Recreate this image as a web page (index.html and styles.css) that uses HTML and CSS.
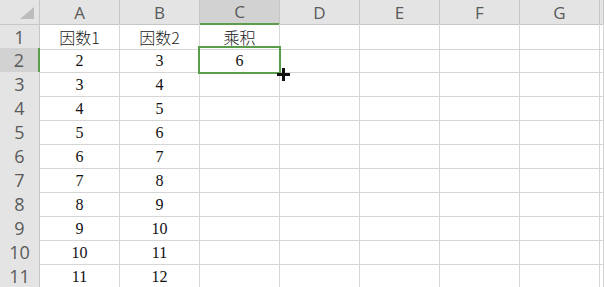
FILE: index.html
```html
<!DOCTYPE html>
<html lang="zh-CN">
<head>
    <meta charset="UTF-8">
    <title>乘积</title>
    <link rel="stylesheet" href="styles.css">
</head>
<body>

    <!-- Sheet -->
    <div class="sheet">
        <div class="row head">
            <div class="corner"><span class="tri"></span></div>
            <div class="col">A</div>
            <div class="col">B</div>
            <div class="col active">C</div>
            <div class="col">D</div>
            <div class="col">E</div>
            <div class="col">F</div>
            <div class="col">G</div>
            <div class="col"></div>
        </div>

        <div class="row">
            <div class="num">1</div>
            <div class="cell cjk">因数1</div>
            <div class="cell cjk">因数2</div>
            <div class="cell cjk">乘积</div>
            <div class="cell"></div><div class="cell"></div><div class="cell"></div><div class="cell"></div><div class="cell"></div>
        </div>
        <div class="row">
            <div class="num active">2</div>
            <div class="cell">2</div>
            <div class="cell">3</div>
            <div class="cell selected">6<span class="fill-cursor"></span></div>
            <div class="cell"></div><div class="cell"></div><div class="cell"></div><div class="cell"></div><div class="cell"></div>
        </div>
        <div class="row">
            <div class="num">3</div>
            <div class="cell">3</div>
            <div class="cell">4</div>
            <div class="cell"></div><div class="cell"></div><div class="cell"></div><div class="cell"></div><div class="cell"></div><div class="cell"></div>
        </div>
        <div class="row">
            <div class="num">4</div>
            <div class="cell">4</div>
            <div class="cell">5</div>
            <div class="cell"></div><div class="cell"></div><div class="cell"></div><div class="cell"></div><div class="cell"></div><div class="cell"></div>
        </div>
        <div class="row">
            <div class="num">5</div>
            <div class="cell">5</div>
            <div class="cell">6</div>
            <div class="cell"></div><div class="cell"></div><div class="cell"></div><div class="cell"></div><div class="cell"></div><div class="cell"></div>
        </div>
        <div class="row">
            <div class="num">6</div>
            <div class="cell">6</div>
            <div class="cell">7</div>
            <div class="cell"></div><div class="cell"></div><div class="cell"></div><div class="cell"></div><div class="cell"></div><div class="cell"></div>
        </div>
        <div class="row">
            <div class="num">7</div>
            <div class="cell">7</div>
            <div class="cell">8</div>
            <div class="cell"></div><div class="cell"></div><div class="cell"></div><div class="cell"></div><div class="cell"></div><div class="cell"></div>
        </div>
        <div class="row">
            <div class="num">8</div>
            <div class="cell">8</div>
            <div class="cell">9</div>
            <div class="cell"></div><div class="cell"></div><div class="cell"></div><div class="cell"></div><div class="cell"></div><div class="cell"></div>
        </div>
        <div class="row">
            <div class="num">9</div>
            <div class="cell">9</div>
            <div class="cell">10</div>
            <div class="cell"></div><div class="cell"></div><div class="cell"></div><div class="cell"></div><div class="cell"></div><div class="cell"></div>
        </div>
        <div class="row">
            <div class="num">10</div>
            <div class="cell">10</div>
            <div class="cell">11</div>
            <div class="cell"></div><div class="cell"></div><div class="cell"></div><div class="cell"></div><div class="cell"></div><div class="cell"></div>
        </div>
        <div class="row">
            <div class="num">11</div>
            <div class="cell">11</div>
            <div class="cell">12</div>
            <div class="cell"></div><div class="cell"></div><div class="cell"></div><div class="cell"></div><div class="cell"></div><div class="cell"></div>
        </div>
    </div>

</body>
</html>
```

FILE: styles.css
```css
/* Sheet */
body {
    margin: 0;
    padding: 0;
    background-color: white;
    overflow: hidden;
}

.sheet {
    width: 604px;
}

.row {
    display: grid;
    grid-template-columns: 40px repeat(7, 80px) 1fr;
    height: 24px;
}

.row > div {
    box-sizing: border-box;
    border-right: 1px solid #d6d6d6;
    border-bottom: 1px solid #d6d6d6;
    display: flex;
    align-items: center;
    justify-content: center;
}

/* Headers */
.corner,
.col,
.num {
    background-color: #e4e4e4;
    color: #5a5a5a;
    font-family: "Open Sans", "Liberation Sans", sans-serif;
}

.row > .corner,
.row > .col,
.row > .num {
    border-color: #c6c6c6;
}

.col {
    font-size: 17px;
}

.num {
    font-size: 18px;
}

.corner {
    position: relative;
}

.tri {
    position: absolute;
    right: 5px;
    bottom: 5px;
    width: 0;
    height: 0;
    border-left: 14px solid transparent;
    border-bottom: 12px solid #bcbcbc;
}

.row > .col.active {
    background-color: #d2d2d2;
    border-bottom: 2px solid #5a9e4c;
}

.row > .num.active {
    background-color: #d2d2d2;
    border-right: 2px solid #5a9e4c;
}

/* Cells */
.cell {
    font-family: "Liberation Serif", "Noto Sans CJK SC", serif;
    font-size: 16px;
    color: #111;
    padding-top: 1px;
}

.cell.cjk {
    font-family: "Noto Sans CJK SC", sans-serif;
    font-size: 16px;
    font-weight: 300;
    color: #222;
}

.cell.selected {
    position: relative;
}

.cell.selected::after {
    content: "";
    position: absolute;
    left: -2px;
    top: -2px;
    right: -2px;
    bottom: -2px;
    border: 2px solid #5a9e4c;
}

/* Fill handle cursor */
.fill-cursor {
    position: absolute;
    left: 77px;
    top: 20px;
    width: 13px;
    height: 13px;
    z-index: 2;
    background:
        linear-gradient(#111, #111) center / 13px 3px no-repeat,
        linear-gradient(#111, #111) center / 3px 13px no-repeat;
}
```
